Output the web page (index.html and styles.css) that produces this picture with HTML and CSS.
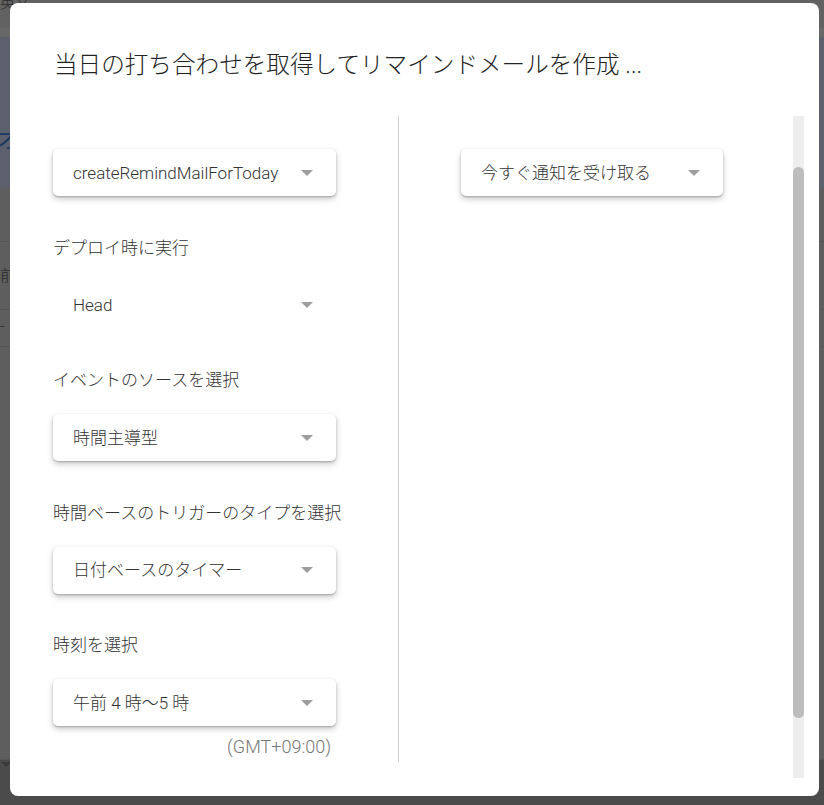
FILE: index.html
```html
<!DOCTYPE html>
<html lang="ja">
<head>
<meta charset="utf-8">
<title>トリガーを追加</title>
<link rel="stylesheet" href="styles.css">
</head>
<body>
<div class="page">
  <div class="bg-top"><span class="bg-top-text">英文</span></div>
  <div class="bg-strip"></div>
  <div class="bg-hero"><span class="bg-hero-text">オ</span></div>
  <div class="bg-row bg-row-a"></div>
  <div class="bg-row bg-row-b"><span class="bg-row-text">前</span></div>
  <div class="bg-row bg-row-c"><span class="bg-row-text small">-</span></div>
  <div class="bg-rest"></div>
  <div class="bg-foot"><span class="bg-foot-arrow"></span></div>
</div>

<div class="dialog">
  <h1 class="dialog-title">当日の打ち合わせを取得してリマインドメールを作成 ...</h1>
  <div class="dialog-body">
    <div class="col col-left">
      <div class="select raised">
        <span class="select-text">createRemindMailForToday</span>
        <span class="caret"></span>
      </div>

      <div class="label">デプロイ時に実行</div>
      <div class="select flat">
        <span class="select-text">Head</span>
        <span class="caret"></span>
      </div>

      <div class="label">イベントのソースを選択</div>
      <div class="select raised">
        <span class="select-text">時間主導型</span>
        <span class="caret"></span>
      </div>

      <div class="label">時間ベースのトリガーのタイプを選択</div>
      <div class="select raised">
        <span class="select-text">日付ベースのタイマー</span>
        <span class="caret"></span>
      </div>

      <div class="label">時刻を選択</div>
      <div class="select raised last">
        <span class="select-text">午前 4 時～5 時</span>
        <span class="caret"></span>
      </div>
      <div class="tz">(GMT+09:00)</div>
    </div>

    <div class="col col-right">
      <div class="select raised narrow">
        <span class="select-text">今すぐ通知を受け取る</span>
        <span class="caret"></span>
      </div>
    </div>

    <div class="scrollbar">
      <div class="scroll-thumb"></div>
    </div>
  </div>
</div>
</body>
</html>
```

FILE: styles.css
```css
* { box-sizing: border-box; }

html, body {
  margin: 0;
  padding: 0;
}

body {
  width: 824px;
  height: 805px;
  overflow: hidden;
  background: #595959;
  font-family: Roboto, "Noto Sans CJK JP", sans-serif;
  font-weight: 300;
  color: #333333;
}

/* ---------- dimmed page behind the dialog ---------- */
.page {
  width: 824px;
  height: 805px;
  display: flex;
  flex-direction: column;
  background: #5e5e5e;
}

.bg-top {
  height: 28px;
  background: #626262;
  overflow: hidden;
}

.bg-top-text {
  display: block;
  margin-top: -9px;
  font-size: 15px;
  color: #2a2a2a;
}

.bg-strip {
  height: 9px;
  background: #686868;
}

.bg-hero {
  height: 151px;
  background: #5b606c;
  overflow: hidden;
}

.bg-hero-text {
  display: block;
  margin-top: 90px;
  margin-left: -3px;
  font-size: 24px;
  line-height: 26px;
  font-weight: 400;
  color: #1b3763;
}

.bg-row {
  border-bottom: 1px solid #545454;
  overflow: hidden;
}

.bg-row-a { height: 54px; }

.bg-row-b { height: 68px; }

.bg-row-c { height: 37px; }

.bg-row-text {
  display: block;
  margin-top: 25px;
  font-size: 16px;
  line-height: 18px;
  color: #2a2a2a;
}

.bg-row-text.small {
  margin-top: 8px;
}

.bg-rest {
  height: 413px;
  border-bottom: 1px solid #545454;
}

.bg-foot {
  flex: 1;
  background: #4b4b4b;
  position: relative;
}

.bg-foot-arrow {
  position: absolute;
  left: 1px;
  top: 2px;
  width: 0;
  height: 0;
  border-left: 5px solid transparent;
  border-right: 5px solid transparent;
  border-top: 5px solid #3a3a3a;
}

/* ---------- dialog ---------- */
.dialog {
  position: absolute;
  left: 10px;
  top: 3px;
  width: 809px;
  height: 793px;
  background: #ffffff;
  border-radius: 8px;
  display: flex;
  flex-direction: column;
  padding: 0 15px 18px 43px;
}

.dialog-title {
  margin: 0;
  padding-top: 46px;
  padding-left: 1px;
  height: 113px;
  font-size: 23.6px;
  line-height: 32px;
  font-weight: 300;
  color: #222222;
  white-space: nowrap;
}

.dialog-body {
  flex: 1;
  display: flex;
  align-items: flex-start;
}

.col-left {
  width: 346px;
  flex: none;
  border-right: 1px solid #cfcfcf;
  padding-top: 33px;
  padding-bottom: 5px;
}

.col-right {
  flex: 1;
  padding-top: 33px;
  padding-left: 62px;
}

.label {
  margin-top: 39.5px;
  margin-bottom: 22px;
  font-size: 17px;
  line-height: 24px;
  color: #333333;
  white-space: nowrap;
}

.select {
  width: 283px;
  height: 47px;
  border-radius: 5px;
  display: flex;
  align-items: center;
  justify-content: space-between;
  padding: 0 23px 0 20px;
  font-size: 17px;
  color: #333333;
  background: #ffffff;
}

.select.raised {
  box-shadow: 0 1px 2px rgba(0, 0, 0, 0.22), 0 3px 6px rgba(0, 0, 0, 0.22);
}

.select.narrow {
  width: 262px;
}

.select-text {
  white-space: nowrap;
  line-height: 24px;
}

.caret {
  width: 0;
  height: 0;
  border-left: 6.5px solid transparent;
  border-right: 6.5px solid transparent;
  border-top: 6px solid #9e9e9e;
  flex: none;
}

.tz {
  width: 283px;
  margin-top: 11px;
  padding-right: 5px;
  text-align: right;
  font-size: 18px;
  line-height: 20px;
  color: #777777;
}

/* ---------- scrollbar ---------- */
.scrollbar {
  width: 11px;
  flex: none;
  align-self: stretch;
  background: #eeeeee;
  padding-top: 51px;
  padding-bottom: 60px;
  display: flex;
}

.scroll-thumb {
  flex: 1;
  background: #bdbdbd;
  border-radius: 6px;
}
```
